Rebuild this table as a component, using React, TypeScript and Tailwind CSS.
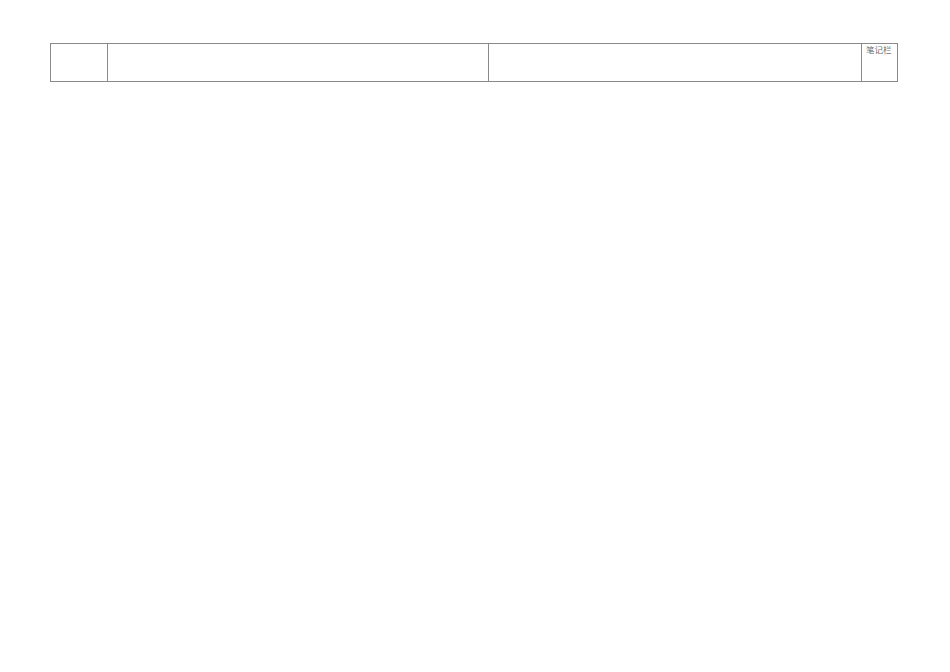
export default function App() {
  return (
    <div className="min-h-[672px] w-[950px] bg-white pl-[50px] pt-[43px]">
      <div className="flex h-[39px] w-[848px] border border-[#8a8a8a]">
        <div className="w-[56px]" />
        <div className="w-[381px] border-l border-[#8a8a8a]" />
        <div className="w-[373px] border-l border-[#8a8a8a]" />
        <div
          className="flex-1 border-l border-[#8a8a8a] pl-[4px] text-[8.5px] leading-[10px] text-[#707070]"
          style={{ fontFamily: '"Noto Sans CJK SC", sans-serif' }}
        >
          笔记栏
        </div>
      </div>
    </div>
  );
}
